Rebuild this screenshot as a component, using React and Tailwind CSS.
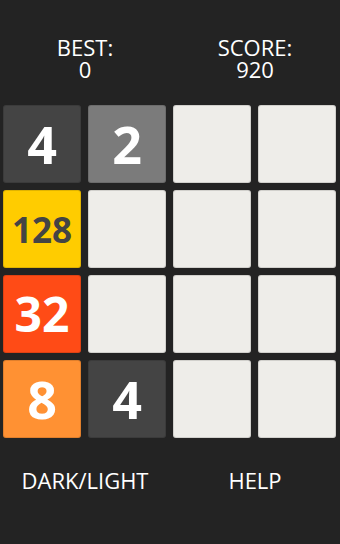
import React from 'react';

const board = [
  [4, 2, 0, 0],
  [128, 0, 0, 0],
  [32, 0, 0, 0],
  [8, 4, 0, 0],
];

const tileStyle = {
  0: 'bg-[#eeede9]',
  2: 'bg-[#7b7b7b] text-white',
  4: 'bg-[#444444] text-white',
  8: 'bg-[#ff9133] text-white',
  32: 'bg-[#ff4b16] text-white',
  128: 'bg-[#ffcc00] text-[#444444]',
};

function Tile({ value }) {
  const size = value >= 100 ? 'text-[35px]' : value >= 10 ? 'text-[48px]' : 'text-[52px]';
  return (
    <div className={`h-[78px] rounded-[3px] shadow-[inset_0_0_0_1px_rgba(0,0,0,0.12)] flex items-center justify-center font-bold leading-none ${tileStyle[value]} ${size}`}>
      {value ? value : ''}
    </div>
  );
}

export default function App() {
  return (
    <div className="w-[340px] h-[544px] bg-[#232323] text-white flex flex-col" style={{ fontFamily: '"Open Sans", sans-serif' }}>
      <div className="grid grid-cols-2 pt-[36px] text-[22px] leading-[22px] text-center">
        <div>
          <p>BEST:</p>
          <p>0</p>
        </div>
        <div>
          <p>SCORE:</p>
          <p>920</p>
        </div>
      </div>
      <div className="grid grid-cols-4 gap-[7px] pl-[3px] pr-[4px] mt-[25px]">
        {board.flat().map((v, i) => (
          <Tile key={i} value={v} />
        ))}
      </div>
      <div className="grid grid-cols-2 mt-[31px] text-[22px] leading-[22px] text-center">
        <button className="text-center">DARK/LIGHT</button>
        <button className="text-center">HELP</button>
      </div>
    </div>
  );
}
